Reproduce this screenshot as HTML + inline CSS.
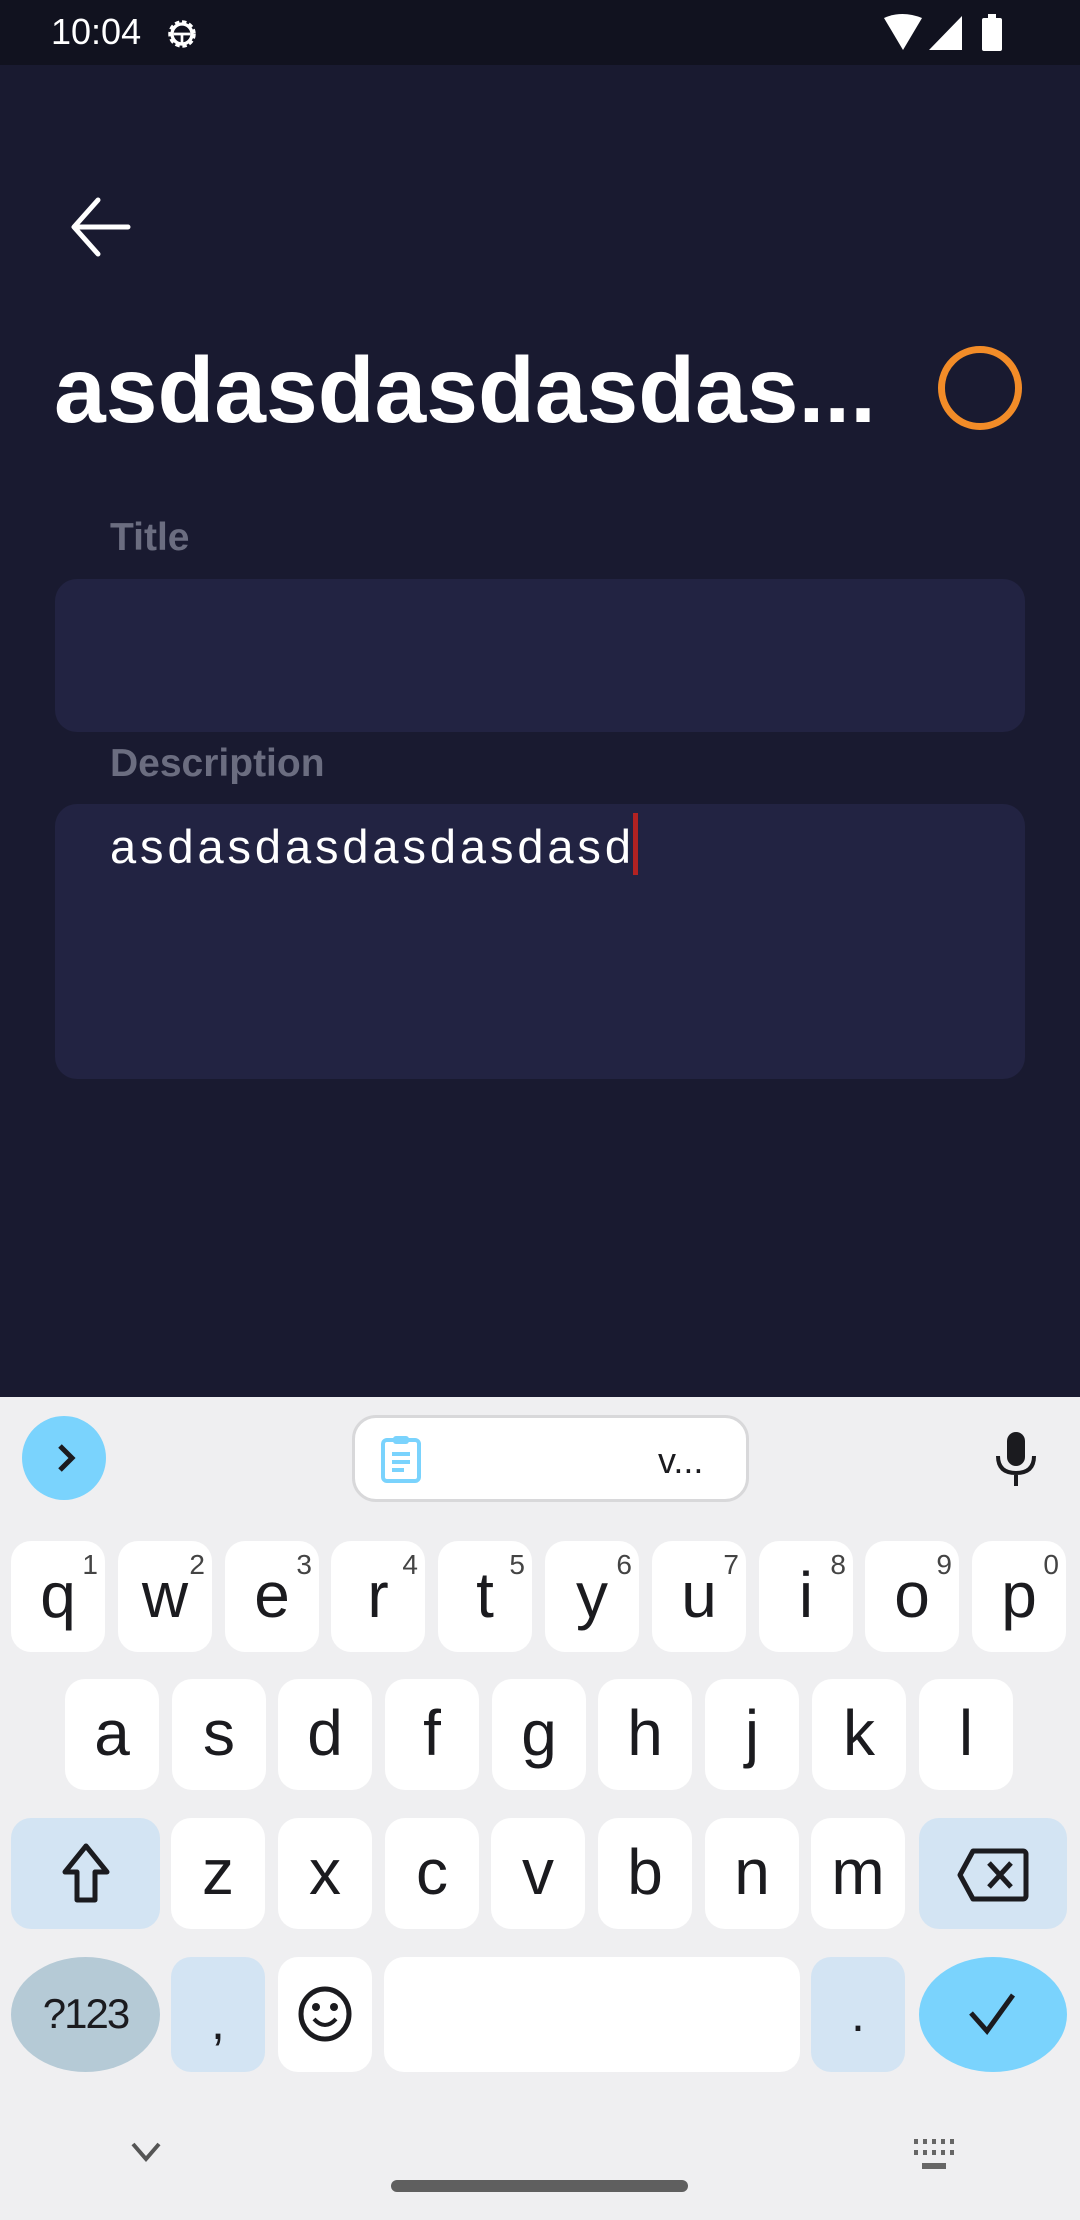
<!DOCTYPE html>
<html><head><meta charset="utf-8"><style>
*{margin:0;padding:0;box-sizing:border-box}
body{width:1080px;height:2220px;background:#191a30;position:relative;overflow:hidden;font-family:"Liberation Sans",sans-serif}
.a{position:absolute}
.k{position:absolute;background:#fff;border-radius:20px;color:#1b1b1f;font-size:64px;text-align:center}
.k span{position:absolute;left:0;right:0}
.k sup{position:absolute;right:7px;top:8px;font-size:28px;color:#444}
.sp{background:#d3e4f3}
</style></head><body>
<div class="a" style="left:0;top:0;width:1080px;height:65px;background:#11121f"></div>
<div class="a" style="left:51px;top:11px;color:#fff;font-size:36px">10:04</div>
<svg class="a" style="left:160px;top:14px" width="44" height="40" viewBox="0 0 24 24"><circle cx="12" cy="12" r="7" fill="none" stroke="#fff" stroke-width="2.5" stroke-dasharray="2.5 1.6"/><circle cx="12" cy="12" r="6" fill="none" stroke="#fff" stroke-width="2"/><path d="M7 12h10M12 12v6" stroke="#fff" stroke-width="1.6"/></svg>
<svg class="a" style="left:880px;top:14px" width="130" height="38" viewBox="0 0 130 38"><path d="M4 4 Q22 -4 42 4 L23 36Z" fill="#fff"/><path d="M82 2 V36 H49Z" fill="#fff"/><rect x="102" y="4" width="20" height="33" rx="2" fill="#fff"/><rect x="108" y="0" width="8" height="5" fill="#fff"/></svg>
<svg class="a" style="left:68px;top:196px" width="64" height="62" viewBox="0 0 64 62"><path d="M60 31H8M30 4L6 31l24 27" fill="none" stroke="#fff" stroke-width="5" stroke-linecap="round" stroke-linejoin="round"/></svg>
<div class="a" style="left:54px;top:337px;color:#fff;font-size:93px;font-weight:bold">asdasdasdasdas...</div>
<div class="a" style="left:938px;top:346px;width:84px;height:84px;border:7px solid #f28c28;border-radius:50%"></div>
<div class="a" style="left:110px;top:516px;color:#6b6d80;font-size:39px;font-weight:bold">Title</div>
<div class="a" style="left:55px;top:579px;width:970px;height:153px;background:#222342;border-radius:22px"></div>
<div class="a" style="left:110px;top:742px;color:#6b6d80;font-size:39px;font-weight:bold">Description</div>
<div class="a" style="left:55px;top:804px;width:970px;height:275px;background:#222342;border-radius:22px"></div>
<div class="a" style="left:110px;top:819px;color:#fff;font-size:47px;letter-spacing:3.9px">asdasdasdasdasdasd</div>
<div class="a" style="left:633px;top:813px;width:5px;height:62px;background:#b22222"></div>

<div class="a" style="left:0;top:1397px;width:1080px;height:823px;background:#efeff1"></div>
<div class="a" style="left:22px;top:1416px;width:84px;height:84px;border-radius:50%;background:#7ad3fd"></div>
<svg class="a" style="left:48px;top:1440px" width="34" height="36" viewBox="0 0 34 36"><path d="M12 6l12 12-12 12" fill="none" stroke="#1b1b1f" stroke-width="5"/></svg>
<div class="a" style="left:352px;top:1415px;width:397px;height:87px;background:#fff;border:3px solid #d8d8da;border-radius:24px"></div>
<svg class="a" style="left:380px;top:1434px" width="42" height="50" viewBox="0 0 42 50"><rect x="3" y="6" width="36" height="41" rx="4" fill="none" stroke="#7ad3fd" stroke-width="4"/><rect x="13" y="2" width="16" height="8" rx="3" fill="#7ad3fd"/><path d="M12 20h18M12 28h18M12 36h12" stroke="#7ad3fd" stroke-width="4"/></svg>
<div class="a" style="left:658px;top:1440px;font-size:36px;color:#1b1b1f">v...</div>
<svg class="a" style="left:993px;top:1430px" width="46" height="58" viewBox="0 0 46 58"><rect x="14" y="2" width="18" height="34" rx="9" fill="#1b1b1f"/><path d="M5 26q0 17 18 17q18 0 18-17M23 43v13" fill="none" stroke="#1b1b1f" stroke-width="4"/></svg>

<div class="k" style="left:11px;top:1541px;width:94px;height:111px"><span style="top:17px">q</span><sup>1</sup></div>
<div class="k" style="left:118px;top:1541px;width:94px;height:111px"><span style="top:17px">w</span><sup>2</sup></div>
<div class="k" style="left:225px;top:1541px;width:94px;height:111px"><span style="top:17px">e</span><sup>3</sup></div>
<div class="k" style="left:331px;top:1541px;width:94px;height:111px"><span style="top:17px">r</span><sup>4</sup></div>
<div class="k" style="left:438px;top:1541px;width:94px;height:111px"><span style="top:17px">t</span><sup>5</sup></div>
<div class="k" style="left:545px;top:1541px;width:94px;height:111px"><span style="top:17px">y</span><sup>6</sup></div>
<div class="k" style="left:652px;top:1541px;width:94px;height:111px"><span style="top:17px">u</span><sup>7</sup></div>
<div class="k" style="left:759px;top:1541px;width:94px;height:111px"><span style="top:17px">i</span><sup>8</sup></div>
<div class="k" style="left:865px;top:1541px;width:94px;height:111px"><span style="top:17px">o</span><sup>9</sup></div>
<div class="k" style="left:972px;top:1541px;width:94px;height:111px"><span style="top:17px">p</span><sup>0</sup></div>

<div class="k" style="left:65px;top:1679px;width:94px;height:111px"><span style="top:17px">a</span></div>
<div class="k" style="left:172px;top:1679px;width:94px;height:111px"><span style="top:17px">s</span></div>
<div class="k" style="left:278px;top:1679px;width:94px;height:111px"><span style="top:17px">d</span></div>
<div class="k" style="left:385px;top:1679px;width:94px;height:111px"><span style="top:17px">f</span></div>
<div class="k" style="left:492px;top:1679px;width:94px;height:111px"><span style="top:17px">g</span></div>
<div class="k" style="left:598px;top:1679px;width:94px;height:111px"><span style="top:17px">h</span></div>
<div class="k" style="left:705px;top:1679px;width:94px;height:111px"><span style="top:17px">j</span></div>
<div class="k" style="left:812px;top:1679px;width:94px;height:111px"><span style="top:17px">k</span></div>
<div class="k" style="left:919px;top:1679px;width:94px;height:111px"><span style="top:17px">l</span></div>

<div class="k sp" style="left:11px;top:1818px;width:149px;height:111px"><svg style="position:absolute;left:50px;top:24px" width="50" height="62" viewBox="0 0 50 62"><path d="M25 4L4 30h12v28h18V30h12Z" fill="none" stroke="#1b1b1f" stroke-width="5" stroke-linejoin="round"/></svg></div>
<div class="k" style="left:171px;top:1818px;width:94px;height:111px"><span style="top:17px">z</span></div>
<div class="k" style="left:278px;top:1818px;width:94px;height:111px"><span style="top:17px">x</span></div>
<div class="k" style="left:385px;top:1818px;width:94px;height:111px"><span style="top:17px">c</span></div>
<div class="k" style="left:491px;top:1818px;width:94px;height:111px"><span style="top:17px">v</span></div>
<div class="k" style="left:598px;top:1818px;width:94px;height:111px"><span style="top:17px">b</span></div>
<div class="k" style="left:705px;top:1818px;width:94px;height:111px"><span style="top:17px">n</span></div>
<div class="k" style="left:811px;top:1818px;width:94px;height:111px"><span style="top:17px">m</span></div>
<div class="k sp" style="left:919px;top:1818px;width:148px;height:111px"><svg style="position:absolute;left:38px;top:30px" width="72" height="54" viewBox="0 0 72 54"><path d="M3 27L16 3h50a3 3 0 0 1 3 3v42a3 3 0 0 1-3 3H16Z" fill="none" stroke="#1b1b1f" stroke-width="5" stroke-linejoin="round"/><path d="M32 15l22 24M54 15L32 39" stroke="#1b1b1f" stroke-width="5"/></svg></div>

<div class="k" style="left:11px;top:1957px;width:149px;height:115px;background:#b5cad6;border-radius:50%"><span style="top:33px;font-size:42px;letter-spacing:-2px">?123</span></div>
<div class="k sp" style="left:171px;top:1957px;width:94px;height:115px"><span style="top:36px;font-size:50px">,</span></div>
<div class="k" style="left:278px;top:1957px;width:94px;height:115px"><svg style="position:absolute;left:19px;top:28px" width="56" height="58" viewBox="0 0 56 58"><ellipse cx="28" cy="29" rx="24" ry="25" fill="none" stroke="#1b1b1f" stroke-width="5"/><circle cx="19" cy="22" r="4" fill="#1b1b1f"/><circle cx="37" cy="22" r="4" fill="#1b1b1f"/><path d="M17 34q11 12 22 0" fill="none" stroke="#1b1b1f" stroke-width="4"/></svg></div>
<div class="k" style="left:384px;top:1957px;width:416px;height:115px"></div>
<div class="k sp" style="left:811px;top:1957px;width:94px;height:115px"><span style="top:28px;font-size:50px">.</span></div>
<div class="k" style="left:919px;top:1957px;width:148px;height:115px;background:#7ad3fd;border-radius:50%"><svg style="position:absolute;left:48px;top:34px" width="52" height="46" viewBox="0 0 52 46"><path d="M4 22l16 18L46 4" fill="none" stroke="#1b1b1f" stroke-width="5"/></svg></div>

<svg class="a" style="left:130px;top:2140px" width="32" height="24" viewBox="0 0 32 24"><path d="M3 4l13 15L29 4" fill="none" stroke="#555" stroke-width="4"/></svg>
<svg class="a" style="left:912px;top:2137px" width="44" height="40" viewBox="0 0 44 40"><g fill="#666"><rect x="2" y="2" width="4" height="5"/><rect x="11" y="2" width="4" height="5"/><rect x="20" y="2" width="4" height="5"/><rect x="29" y="2" width="4" height="5"/><rect x="38" y="2" width="4" height="5"/><rect x="2" y="13" width="4" height="5"/><rect x="11" y="13" width="4" height="5"/><rect x="20" y="13" width="4" height="5"/><rect x="29" y="13" width="4" height="5"/><rect x="38" y="13" width="4" height="5"/><rect x="10" y="26" width="24" height="6"/></g></svg>
<div class="a" style="left:391px;top:2180px;width:297px;height:12px;border-radius:6px;background:#5f5f5f"></div>
</body></html>
